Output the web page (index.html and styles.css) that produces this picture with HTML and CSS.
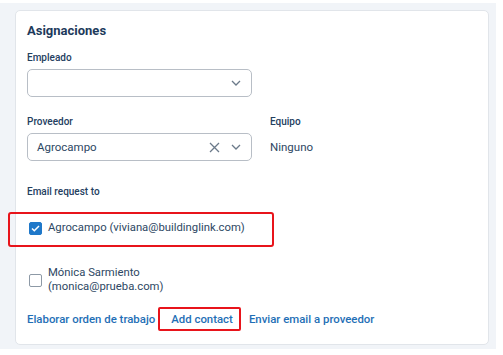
FILE: index.html
```html
<!DOCTYPE html>
<html lang="es">
<head>
    <meta charset="UTF-8">
    <title>Asignaciones</title>
    <link rel="stylesheet" href="styles.css">
</head>
<body>
    <div class="panel">
        <div class="card">
            <h2>Asignaciones</h2>

            <div class="field">
                <label>Empleado</label>
                <div class="select">
                    <span class="value"></span>
                    <svg class="chevron" width="10" height="6" viewBox="0 0 10 6"><path d="M1 1l4 4 4-4" fill="none" stroke="#6b7a8a" stroke-width="1.3"/></svg>
                </div>
            </div>

            <div class="row">
                <div class="field">
                    <label>Proveedor</label>
                    <div class="select">
                        <span class="value">Agrocampo</span>
                        <svg class="clear" width="11" height="11" viewBox="0 0 11 11"><path d="M1 1l9 9M10 1l-9 9" fill="none" stroke="#6b7a8a" stroke-width="1.3"/></svg>
                        <svg class="chevron" width="10" height="6" viewBox="0 0 10 6"><path d="M1 1l4 4 4-4" fill="none" stroke="#6b7a8a" stroke-width="1.3"/></svg>
                    </div>
                </div>
                <div class="field team">
                    <label>Equipo</label>
                    <div class="plain">Ninguno</div>
                </div>
            </div>

            <label class="section">Email request to</label>

            <div class="options">
                <div class="option marked">
                    <span class="box checked">
                        <svg width="9" height="7" viewBox="0 0 9 7"><path d="M1 3.5l2.3 2.3L8 1" fill="none" stroke="#fff" stroke-width="1.5"/></svg>
                    </span>
                    <span>Agrocampo (viviana@buildinglink.com)</span>
                </div>
                <div class="option">
                    <span class="box"></span>
                    <span>Mónica Sarmiento<br>(monica@prueba.com)</span>
                </div>
            </div>

            <div class="links">
                <a href="#">Elaborar orden de trabajo</a>
                <a href="#" class="marked-link">Add contact</a>
                <a href="#">Enviar email a proveedor</a>
            </div>
        </div>
    </div>
</body>
</html>
```

FILE: styles.css
```css
body {
    margin: 0;
    background: #ffffff;
    font-family: Roboto, "Liberation Sans", sans-serif;
    color: #24405f;
}
.panel {
    margin-top: 3px;
    width: 496px;
    height: 346px;
    box-sizing: border-box;
    padding: 7px 7px 4px 15px;
    background: #f1f4f8;
}
.card {
    height: 100%;
    box-sizing: border-box;
    background: #ffffff;
    border: 1px solid #e1e5ea;
    border-radius: 5px;
    padding: 11px 11px 0 11px;
}
h2 {
    margin: 0 0 11px;
    font-size: 13px;
    line-height: 18px;
    font-weight: 700;
    color: #1d3a5b;
}
label {
    display: block;
    font-size: 10px;
    line-height: 14px;
    font-weight: 500;
    color: #24405f;
    margin-bottom: 4px;
}
.field {
    margin-bottom: 18px;
}
.select {
    width: 225px;
    height: 28px;
    box-sizing: border-box;
    border: 1px solid #b8bec6;
    border-radius: 5px;
    display: flex;
    align-items: center;
    padding: 0 10px 0 9px;
    gap: 11px;
}
.select .value {
    flex: 1;
    font-size: 11.5px;
    color: #2d4763;
}
.row {
    display: flex;
    gap: 18px;
}
.plain {
    font-size: 11.5px;
    line-height: 28px;
    color: #2d4763;
}
.section {
    margin-top: 6px;
    margin-bottom: 22px;
}
.options {
    display: flex;
    flex-direction: column;
    gap: 31px;
    margin-left: 2px;
}
.option {
    display: flex;
    align-items: center;
    gap: 6px;
    font-size: 11.3px;
    line-height: 14px;
    color: #2d4763;
    position: relative;
}
.option.marked::after {
    content: "";
    position: absolute;
    left: -21px;
    top: -9px;
    width: 262px;
    height: 31px;
    border: 2px solid #e8141b;
    border-radius: 3px;
}
.box {
    width: 11px;
    height: 11px;
    border: 1px solid #8d99a6;
    border-radius: 2px;
    display: flex;
    align-items: center;
    justify-content: center;
    flex-shrink: 0;
}
.box.checked {
    background: #1f78c9;
    border-color: #1f78c9;
}
.links {
    display: flex;
    gap: 16px;
    margin-top: 18px;
}
.links a {
    font-size: 11.4px;
    font-weight: 500;
    color: #1f6fb6;
    text-decoration: none;
    line-height: 14px;
}
.marked-link {
    position: relative;
}
.marked-link::after {
    content: "";
    position: absolute;
    left: -13px;
    right: -8px;
    top: -5px;
    bottom: -5px;
    border: 2px solid #e8141b;
    border-radius: 2px;
}
```
